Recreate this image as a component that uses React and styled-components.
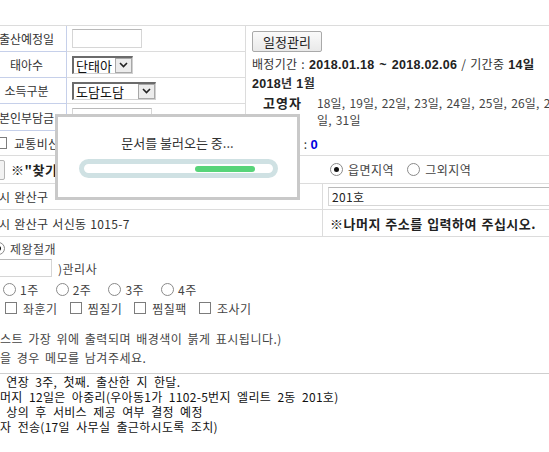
import styled, { createGlobalStyle } from 'styled-components';

const GlobalStyle = createGlobalStyle`
  html, body {
    margin: 0;
    padding: 0;
    background: #fff;
    overflow: hidden;
  }
  body {
    font-family: "Noto Sans CJK KR", sans-serif;
    font-size: 12px;
    color: #333;
  }
`;

const Page = styled.div`
  position: relative;
  width: 640px;
  height: 452px;
  margin-left: -13px;
  padding-top: 25px;
  box-sizing: border-box;
`;

const TopTable = styled.div`
  display: grid;
  grid-template-columns: 80px 178px 1fr;
  grid-template-rows: 26px 26px 26px 27px;
  border-top: 1px solid #dcdcdc;
`;

const LabelCell = styled.div`
  display: flex;
  align-items: center;
  justify-content: center;
  border-right: 1px solid #c6d0ea;
  border-bottom: 1px solid #c6d0ea;
  white-space: nowrap;
`;

const ValueCell = styled.div`
  display: flex;
  align-items: center;
  padding-left: 5px;
  border-bottom: 1px solid #dcdcdc;
`;

const ScheduleCell = styled.div`
  grid-column: 3;
  grid-row: 1 / span 4;
  border-left: 1px solid #dcdcdc;
  padding: 5px 0 0 6px;
  display: flex;
  flex-direction: column;
  align-items: flex-start;
`;

const TextInput = styled.div`
  box-sizing: border-box;
  width: ${p => p.$w}px;
  height: ${p => p.$h || 18}px;
  border: 1px solid #d6d6d6;
  border-top-color: #b9b9b9;
  padding: 0 3px 0 ${p => p.$pl || 3}px;
  display: flex;
  align-items: center;
  font-size: 12px;
  color: #222;
  background: #fff;
`;

const SelectBox = styled.div`
  box-sizing: border-box;
  width: ${p => p.$w}px;
  height: 18px;
  border-style: solid;
  border-width: 2px 1px 1px 2px;
  border-color: #6b6b6b #d0d0d0 #d0d0d0 #6b6b6b;
  display: flex;
  align-items: center;
  justify-content: space-between;
  padding-left: 2px;
  font-size: 13px;
  color: #111;
  background: #fff;
`;

const SelectArrow = styled.span`
  box-sizing: border-box;
  width: 17px;
  height: 15px;
  background: #ececec;
  border: 1px solid #a8a8a8;
  display: flex;
  align-items: center;
  justify-content: center;
`;

const GrayButton = styled.div`
  box-sizing: border-box;
  height: 21px;
  padding: 0 10px;
  border: 1px solid #a9a9a9;
  border-radius: 2px;
  background: linear-gradient(#fafafa, #e9e9e9);
  display: flex;
  align-items: center;
  font-size: 13px;
  color: #222;
`;

const InfoLine = styled.div`
  margin-top: ${p => p.$mt || 0}px;
  font-size: 12px;
  line-height: 16px;
  letter-spacing: 0.3px;
  word-spacing: 1px;
  white-space: nowrap;
  color: #333;
`;

const Strong = styled.b`
  font-family: "Liberation Sans", "Noto Sans CJK KR", sans-serif;
  font-weight: bold;
  font-size: 12.5px;
  color: #222;
`;

const Worker = styled.div`
  display: grid;
  grid-template-columns: 54px 1fr;
  padding-left: 11px;
  margin-top: 2px;
  line-height: 17px;
  white-space: nowrap;
`;

const WorkerName = styled.b`
  font-size: 13px;
  letter-spacing: 1px;
  color: #222;
`;

const Dates = styled.div`
  font-size: 12px;
  letter-spacing: 0.1px;
  word-spacing: 1.5px;
  color: #444;
`;

const Rows = styled.div`
  display: flex;
  flex-direction: column;
`;

const Row = styled.div`
  display: grid;
  grid-template-columns: 335px 1fr;
  height: ${p => p.$h}px;
  border-bottom: 1px solid #dcdcdc;
  box-sizing: border-box;
`;

const Cell = styled.div`
  display: flex;
  align-items: center;
  gap: ${p => p.$gap || 0}px;
  padding-left: ${p => p.$pl || 0}px;
  border-left: ${p => p.$divider ? '1px solid #dcdcdc' : 'none'};
  letter-spacing: 0.3px;
  word-spacing: 1px;
  white-space: nowrap;
`;

const Count = styled.span`
  margin-left: auto;
  padding-right: 4px;
  color: #333;
`;

const BlueNum = styled.b`
  color: #0000e0;
  font-family: "Liberation Sans", sans-serif;
  font-size: 13px;
  margin-left: 3px;
`;

const Notice = styled.b`
  font-size: 13px;
  color: #222;
  letter-spacing: 0.5px;
`;

const EdgeButton = styled.span`
  box-sizing: border-box;
  width: 18px;
  height: 20px;
  border: 1px solid #b5b5b5;
  border-radius: 2px;
  background: #f2f2f2;
  margin-left: -13px;
`;

const Box = styled.span`
  box-sizing: border-box;
  width: 12px;
  height: 12px;
  border: 1px solid #7c7c7c;
  background: #fff;
  flex: none;
`;

const Radio = styled.span`
  box-sizing: border-box;
  width: 13px;
  height: 13px;
  border-radius: 50%;
  border: 1px solid #8a8a8a;
  background: #fff;
  flex: none;
  display: flex;
  align-items: center;
  justify-content: center;
  &::after {
    content: '';
    width: 5px;
    height: 5px;
    border-radius: 50%;
    background: ${p => p.$on ? '#111' : 'transparent'};
  }
`;

const Option = styled.label`
  display: flex;
  align-items: center;
  gap: ${p => p.$gap || 5}px;
  font-size: 12px;
  letter-spacing: 0.5px;
  color: #444;
  white-space: nowrap;
`;

const Lower = styled.div`
  display: flex;
  flex-direction: column;
  padding-left: 13px;
`;

const Line = styled.div`
  display: flex;
  align-items: center;
  gap: ${p => p.$gap || 0}px;
  height: ${p => p.$h}px;
  margin-left: ${p => p.$ml || 0}px;
  font-size: 12px;
  letter-spacing: 0.5px;
  word-spacing: 2px;
  color: #444;
  white-space: nowrap;
`;

const Memo = styled.div`
  margin-left: 13px;
  margin-top: 6px;
  border-top: 1px solid #cfcfcf;
  font-family: "Noto Sans CJK KR", sans-serif;
  font-size: 12px;
  line-height: 15px;
  letter-spacing: 0.3px;
  word-spacing: 3.3px;
  color: #111;
  white-space: pre;
`;

const Dialog = styled.div`
  position: absolute;
  left: 68px;
  top: 114px;
  width: 245px;
  height: 86px;
  box-sizing: border-box;
  border: 3px solid #c9c9c9;
  background: #fff;
  display: flex;
  flex-direction: column;
  align-items: center;
  padding-top: 18px;
`;

const DialogText = styled.div`
  font-size: 13px;
  color: #333;
  line-height: 16px;
`;

const Track = styled.div`
  box-sizing: border-box;
  margin-top: 8px;
  margin-left: 2px;
  width: 199px;
  height: 19px;
  border: 5px solid #cfe1e3;
  border-radius: 10px;
  background: #fff;
  display: flex;
  align-items: center;
  padding-left: 111px;
`;

const Fill = styled.div`
  width: 60px;
  height: 6px;
  border-radius: 3px;
  background: #57d479;
`;

const Chevron = () => (
  <svg width="9" height="6" viewBox="0 0 9 6">
    <path d="M1 1l3.5 3.5L8 1" fill="none" stroke="#222" strokeWidth="1.6" />
  </svg>
);

const Select = ({ w, children }) => (
  <SelectBox $w={w}>
    <span>{children}</span>
    <SelectArrow><Chevron /></SelectArrow>
  </SelectBox>
);

const memo = ` 연장 3주, 첫째. 출산한 지 한달.
머지 12일은 아중리(우아동1가 1102-5번지 엘리트 2동 201호)
 상의 후 서비스 제공 여부 결정 예정
자 전송(17일 사무실 출근하시도록 조치)`;

export default function App() {
  return (
    <>
      <GlobalStyle />
      <Page>
        <TopTable>
          <LabelCell>출산예정일</LabelCell>
          <ValueCell><TextInput $w={70} $h={19} /></ValueCell>
          <LabelCell>태아수</LabelCell>
          <ValueCell><Select w={61}>단태아</Select></ValueCell>
          <LabelCell>소득구분</LabelCell>
          <ValueCell><Select w={84}>도담도담</Select></ValueCell>
          <LabelCell>본인부담금</LabelCell>
          <ValueCell><TextInput $w={80} $h={19} $pl={24}>1,185,000</TextInput></ValueCell>
          <ScheduleCell>
            <GrayButton>일정관리</GrayButton>
            <InfoLine $mt={4}>
              배정기간 : <Strong>2018.01.18 ~ 2018.02.06</Strong> / 기간중 <Strong>14일</Strong>
            </InfoLine>
            <InfoLine $mt={2}><Strong>2018</Strong><b>년</b> <Strong>1</Strong><b>월</b></InfoLine>
            <Worker>
              <WorkerName>고영자</WorkerName>
              <Dates>
                18일, 19일, 22일, 23일, 24일, 25일, 26일, 29일, 30<br />일, 31일
              </Dates>
            </Worker>
          </ScheduleCell>
        </TopTable>

        <Rows>
          <Row $h={25}>
            <Cell $pl={8} $gap={7}>
              <Box />교통비신청
              <Count>:<BlueNum>0</BlueNum></Count>
            </Cell>
            <Cell />
          </Row>
          <Row $h={28}>
            <Cell $pl={13} $gap={6}>
              <EdgeButton />
              <Notice>※"찾기" 버튼을 눌러 주소를 검색하십시오.</Notice>
            </Cell>
            <Cell $pl={8} $gap={13}>
              <Option><Radio $on />읍면지역</Option>
              <Option><Radio />그외지역</Option>
            </Cell>
          </Row>
          <Row $h={26}>
            <Cell $pl={12}>시 완산구</Cell>
            <Cell $pl={5} $divider><TextInput $w={240} $h={19}>201호</TextInput></Cell>
          </Row>
          <Row $h={27}>
            <Cell $pl={12}>시 완산구 서신동 1015-7</Cell>
            <Cell $pl={7} $divider><Notice>※나머지 주소를 입력하여 주십시오.</Notice></Cell>
          </Row>
        </Rows>

        <Lower>
          <Line $h={22} $gap={5} $ml={-8}><Radio $on />제왕절개</Line>
          <Line $h={18} $gap={6} $ml={-20}><TextInput $w={72} $h={18} />)관리사</Line>
          <Line $h={24} $gap={17} $ml={3}>
            <Option $gap={4}><Radio />1주</Option>
            <Option $gap={4}><Radio />2주</Option>
            <Option $gap={4}><Radio />3주</Option>
            <Option $gap={4}><Radio />4주</Option>
          </Line>
          <Line $h={14} $gap={12} $ml={5}>
            <Option $gap={6}><Box />좌훈기</Option>
            <Option $gap={6}><Box />찜질기</Option>
            <Option $gap={6}><Box />찜질팩</Option>
            <Option $gap={6}><Box />조사기</Option>
          </Line>
          <Line $h={14} />
          <Line $h={19}>스트 가장 위에 출력되며 배경색이 붉게 표시됩니다.)</Line>
          <Line $h={19}>을 경우 메모를 남겨주세요.</Line>
        </Lower>

        <Memo>{memo}</Memo>

        <Dialog>
          <DialogText>문서를 불러오는 중...</DialogText>
          <Track><Fill /></Track>
        </Dialog>
      </Page>
    </>
  );
}
